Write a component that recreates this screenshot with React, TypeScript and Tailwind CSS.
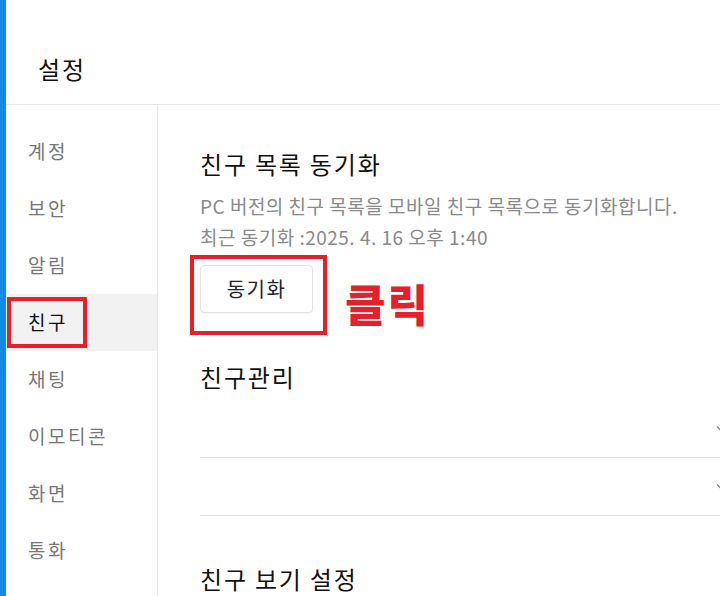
const menu = ['계정', '보안', '알림', '친구', '채팅', '이모티콘', '화면', '통화', '기타']

const Chevron = () => (
  <svg width="14" height="14" viewBox="0 0 14 14" className="-mr-[9px] text-[#8a8a8a]">
    <path d="M2 4.5l5 5 5-5" fill="none" stroke="currentColor" strokeWidth="1.4" />
  </svg>
)

export default function App() {
  return (
    <div
      className="flex h-[596px] w-[720px] flex-col overflow-hidden bg-white"
      style={{fontFamily: '"Noto Sans CJK KR", "Noto Sans", sans-serif'}}
    >
      <div className="h-[2px] bg-gradient-to-r from-[#2a86e6] via-[#1f6fd6] to-[#0c3ea8]"></div>
      <div className="flex flex-1">
        <div className="w-[6px] bg-[#1589e6]"></div>
        <div className="flex flex-1 flex-col">
          <header className="h-[105px] border-b border-[#e6e6e6] pl-[32px] pt-[53px]">
            <h1 className="text-[24px] leading-[32px] tracking-[2px] text-[#111]">설정</h1>
          </header>
          <div className="flex flex-1">
            <nav className="w-[152px] border-r border-[#e6e6e6] pt-[18px]">
              {menu.map((item) => (
                <div
                  key={item}
                  className={`relative flex h-[57px] items-center pl-[22px] text-[19px] tracking-[2.5px] ${
                    item === '친구' ? 'bg-[#f2f2f2] text-[#111]' : 'text-[#777]'
                  }`}
                >
                  {item}
                  {item === '친구' && (
                    <div className="absolute left-[1px] top-[3px] h-[51px] w-[80px] border-[4px] border-[#e3202b]"></div>
                  )}
                </div>
              ))}
            </nav>
            <main className="flex-1 pl-[42px] pt-[43px]">
              <h2 className="text-[24px] leading-[32px] tracking-[1.8px] text-[#111]">친구 목록 동기화</h2>
              <div className="mt-[10px] text-[19px] leading-[31px] tracking-[0.5px] text-[#8a8a8a]">
                <p>PC 버전의 친구 목록을 모바일 친구 목록으로 동기화합니다.</p>
                <p>최근 동기화 :2025. 4. 16 오후 1:40</p>
              </div>
              <div className="relative mt-[13px] h-[48px]">
                <button className="h-[48px] w-[113px] rounded-[4px] border border-[#e2e2e2] bg-white text-[20px] tracking-[1.5px] text-[#222] shadow-[0_1px_1px_rgba(0,0,0,0.04)]">
                  동기화
                </button>
                <div className="absolute -left-[10px] -top-[10px] h-[80px] w-[137px] border-[4px] border-[#e3202b]"></div>
                <span className="absolute left-[145px] top-[8px] text-[44px] font-black leading-[60px] tracking-[2px] text-[#e3202b]">
                  클릭
                </span>
              </div>
              <h2 className="mt-[48px] text-[24px] leading-[32px] tracking-[1.8px] text-[#111]">친구관리</h2>
              <div className="mt-[7px]">
                <div className="flex h-[58px] items-center justify-end border-b border-[#e3e3e3]">
                  <Chevron />
                </div>
                <div className="flex h-[58px] items-center justify-end border-b border-[#e3e3e3]">
                  <Chevron />
                </div>
              </div>
              <h2 className="mt-[47px] text-[24px] leading-[32px] tracking-[1.8px] text-[#111]">친구 보기 설정</h2>
            </main>
          </div>
        </div>
      </div>
    </div>
  )
}
